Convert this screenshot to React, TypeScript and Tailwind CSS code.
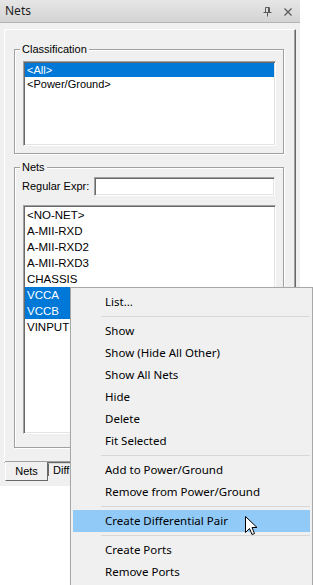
import React from 'react';

const sans = "font-['Liberation_Sans',Arial,sans-serif]";
const ui = "font-['Noto_Sans','Open_Sans',sans-serif]";

const classifications = ['<All>', '<Power/Ground>'];
const nets = ['<NO-NET>', 'A-MII-RXD', 'A-MII-RXD2', 'A-MII-RXD3', 'CHASSIS', 'VCCA', 'VCCB', 'VINPUT'];
const selectedNets = ['VCCA', 'VCCB'];

type MenuEntry = { label: string; active?: boolean } | 'sep';

const menu: MenuEntry[] = [
  { label: 'List...' },
  'sep',
  { label: 'Show' },
  { label: 'Show (Hide All Other)' },
  { label: 'Show All Nets' },
  { label: 'Hide' },
  { label: 'Delete' },
  { label: 'Fit Selected' },
  'sep',
  { label: 'Add to Power/Ground' },
  { label: 'Remove from Power/Ground' },
  'sep',
  { label: 'Create Differential Pair', active: true },
  'sep',
  { label: 'Create Ports' },
  { label: 'Remove Ports' },
];

// sunken classic border used by list boxes and the edit box
const sunken =
  'border border-t-[#a0a0a0] border-l-[#a0a0a0] border-b-white border-r-white shadow-[inset_1px_1px_0_#696969,inset_-1px_-1px_0_#e3e3e3] bg-white';

const GroupBox: React.FC<{ title: string; className?: string; children: React.ReactNode }> = ({ title, className, children }) => (
  <fieldset
    className={`border border-[#a0a0a0] shadow-[inset_1px_1px_0_#fff,1px_1px_0_#fff] pl-[8px] pr-[7px] ${className ?? ''}`}
  >
    <legend className={`${sans} text-[11px] leading-[12px] px-[2px] -ml-[3px] bg-[#f0f0f0] text-black`}>{title}</legend>
    {children}
  </fieldset>
);

const PinIcon = () => (
  <svg width="9" height="10" viewBox="0 0 9 10" className="block">
    <path d="M2.5 0.5h4v5h-4z M0.5 5.5h8 M4.5 5.5v4" fill="none" stroke="#5a5a5a" strokeWidth="1" />
    <path d="M5.5 1v4.5" stroke="#5a5a5a" strokeWidth="1" />
  </svg>
);

const CloseIcon = () => (
  <svg width="8" height="8" viewBox="0 0 8 8" className="block">
    <path d="M0.5 0.5L7.5 7.5M7.5 0.5L0.5 7.5" stroke="#5a5a5a" strokeWidth="1.3" />
  </svg>
);

const Cursor = () => (
  <svg width="13" height="20" viewBox="0 0 13 20" className="block">
    <path
      d="M0.5 0.5 L0.5 16.5 L4.5 12.5 L7 18.5 L9.5 17.5 L7 11.5 L12 11.5 Z"
      fill="#fff"
      stroke="#000"
      strokeWidth="1"
      strokeLinejoin="miter"
    />
  </svg>
);

export default function App() {
  return (
    <div className="relative w-[313px] h-[585px] bg-white overflow-hidden">
      {/* Docked Nets panel */}
      <div className="w-[300px] bg-[#f0f0f0] pb-[5px]">
        {/* Title bar */}
        <div className="h-[23px] flex items-center pl-[5px] pr-[8px] bg-gradient-to-b from-[#e6e6e6] to-[#d4d4d4] border-b border-[#b4b4b4]">
          <span className={`${ui} text-[12px] text-[#1e1e1e] flex-1`}>Nets</span>
          <div className="flex items-center gap-[12px] pt-[1px]">
            <PinIcon />
            <CloseIcon />
          </div>
        </div>

        {/* Tab page */}
        <div className="pt-[6px] px-[4px]">
          <div className="h-[434px] border border-t-white border-l-white border-r-[#696969] border-b-[#696969] shadow-[inset_-1px_-1px_0_#a0a0a0] pl-[9px] pr-[11px] pt-[13px]">
            <GroupBox title="Classification" className="pb-[7px]">
              <div className={`${sunken} h-[85px] mt-[6px] p-[1px]`}>
                {classifications.map((c, i) => (
                  <div
                    key={c}
                    className={`${sans} text-[11px] h-[14px] leading-[14px] pl-[2px] ${
                      i === 0 ? 'bg-[#0078d7] text-white' : 'text-black'
                    }`}
                  >
                    {c}
                  </div>
                ))}
              </div>
            </GroupBox>

            <GroupBox title="Nets" className="mt-[7px] pb-[13px]">
              <div className="flex items-center mt-[4px] h-[19px]">
                <span className={`${sans} text-[11px] text-black w-[72px] -ml-[1px]`}>Regular Expr:</span>
                <div className={`${sunken} h-[19px] w-[181px]`} />
              </div>
              <div className={`${sunken} h-[229px] mt-[9px] p-[1px]`}>
                {nets.map((n) => {
                  const sel = selectedNets.includes(n);
                  return (
                    <div
                      key={n}
                      className={`${sans} text-[11.5px] h-[16px] leading-[16px] pl-[2px] ${
                        sel ? 'bg-[#0078d7] text-white' : 'text-black'
                      }`}
                    >
                      {n}
                    </div>
                  );
                })}
              </div>
            </GroupBox>
          </div>

          {/* Bottom tabs */}
          <div className="flex items-start h-[18px] pl-[1px]">
            <div className="-mt-[1px] h-[19px] w-[43px] bg-[#f0f0f0] border-l border-l-white border-b border-b-[#696969] border-r border-r-[#696969] flex items-center justify-center">
              <span className={`${sans} text-[11px] text-black`}>Nets</span>
            </div>
            <div className="h-[13px] w-[50px] border-t border-t-[#d8d8d8] border-l border-l-[#696969] flex items-center pl-[4px]">
              <span className={`${sans} text-[11px] text-black leading-[12px]`}>Diff Pairs</span>
            </div>
          </div>
        </div>
      </div>

      {/* Context menu */}
      <div className="absolute left-[70px] top-[287px] w-[243px] bg-[#f0f0f0] border border-[#a8a8a8] shadow-[2px_2px_3px_rgba(0,0,0,0.25)] pt-[3px] pb-[2px]">
        {menu.map((m, i) =>
          m === 'sep' ? (
            <div key={i} className="h-[7px] flex items-center ml-[30px] mr-[2px]">
              <div className="h-[1px] w-full bg-[#d7d7d7]" />
            </div>
          ) : (
            <div
              key={i}
              className={`h-[22px] mx-[2px] pl-[32px] flex items-center ${ui} text-[11.5px] text-black ${
                m.active ? 'bg-[#91c9f7]' : ''
              }`}
            >
              {m.label}
            </div>
          )
        )}
      </div>

      {/* Mouse pointer */}
      <div className="absolute left-[245px] top-[516px]">
        <Cursor />
      </div>
    </div>
  );
}
